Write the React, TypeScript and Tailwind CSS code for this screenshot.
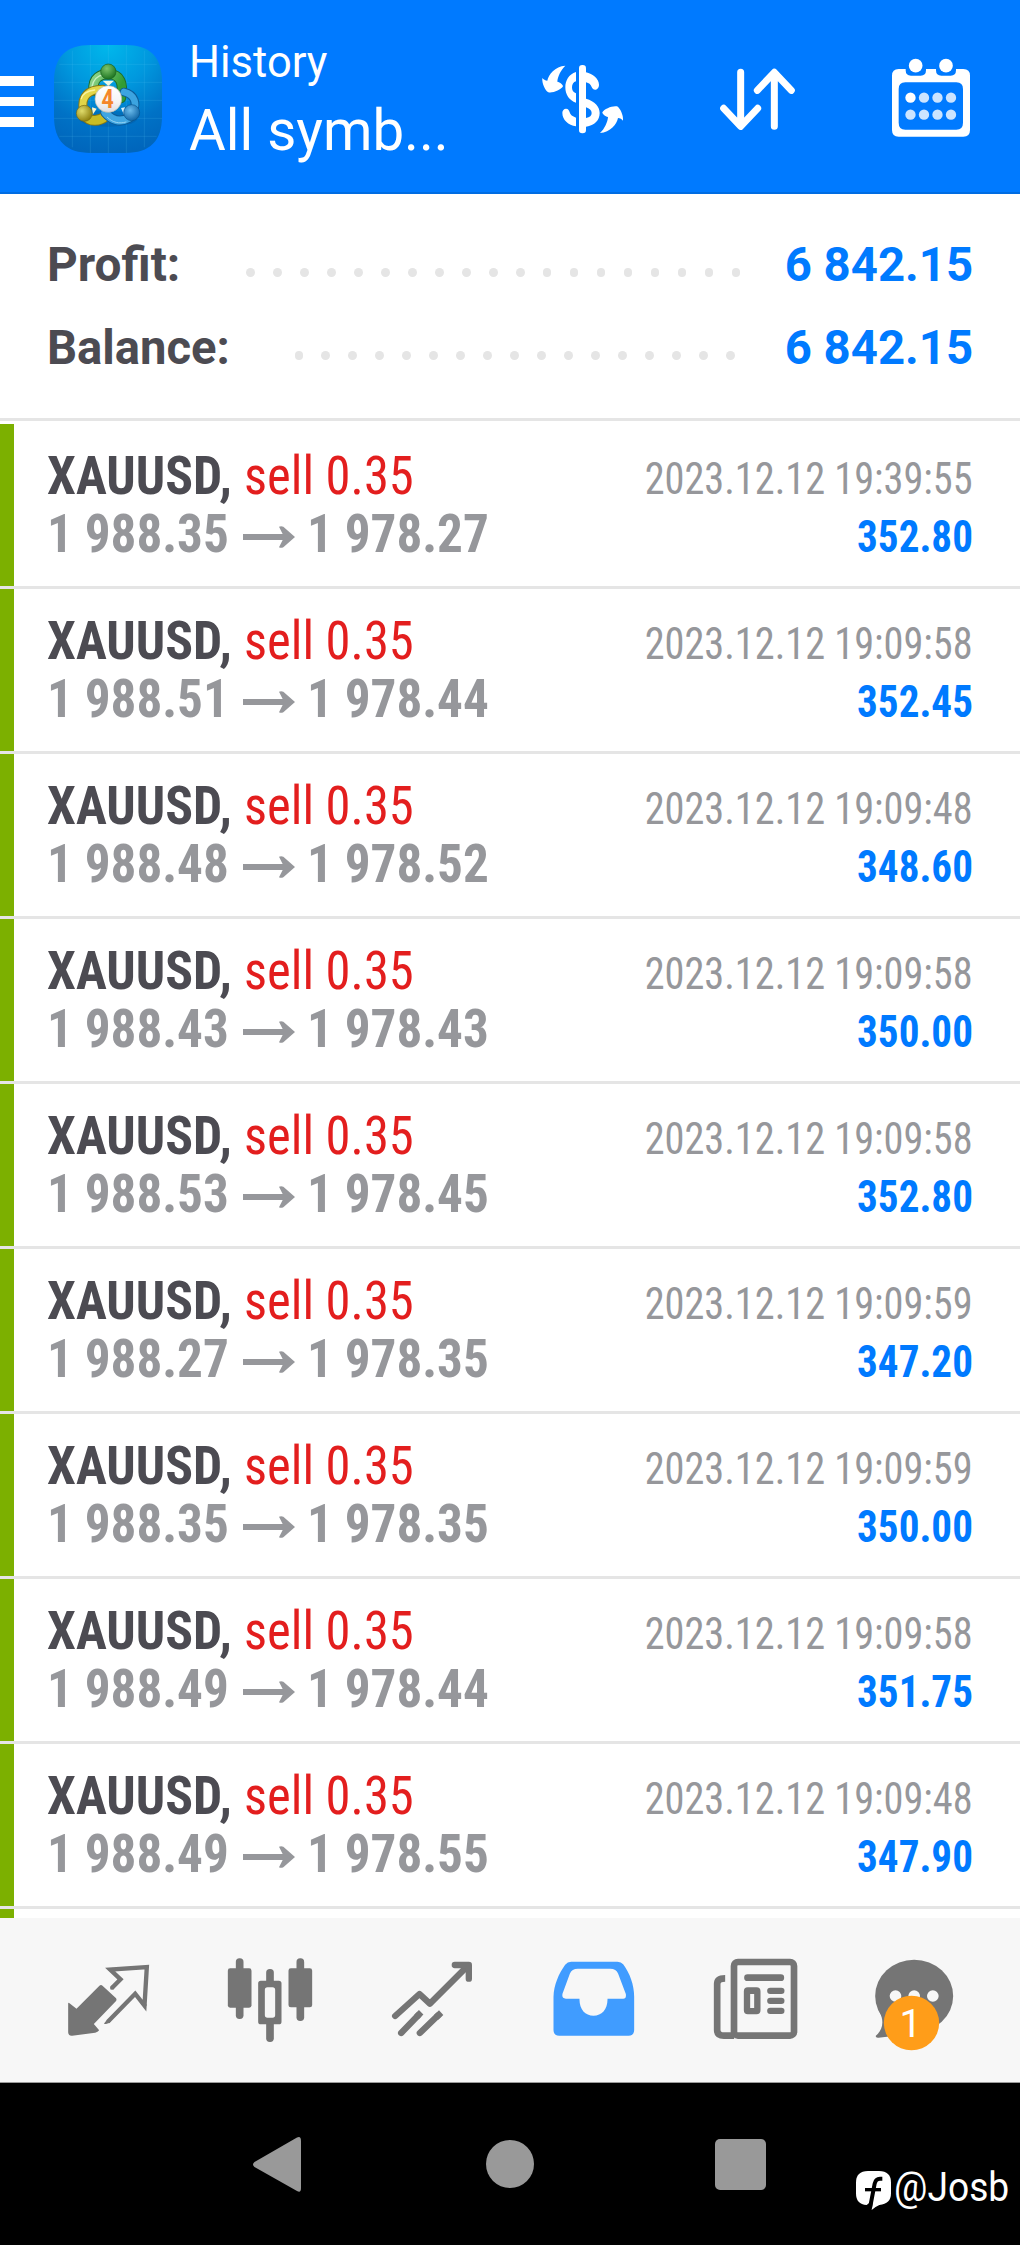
interface Deal {
  open: string;
  close: string;
  time: string;
  profit: string;
}

const deals: Deal[] = [
  { open: '1 988.35', close: '1 978.27', time: '2023.12.12 19:39:55', profit: '352.80' },
  { open: '1 988.51', close: '1 978.44', time: '2023.12.12 19:09:58', profit: '352.45' },
  { open: '1 988.48', close: '1 978.52', time: '2023.12.12 19:09:48', profit: '348.60' },
  { open: '1 988.43', close: '1 978.43', time: '2023.12.12 19:09:58', profit: '350.00' },
  { open: '1 988.53', close: '1 978.45', time: '2023.12.12 19:09:58', profit: '352.80' },
  { open: '1 988.27', close: '1 978.35', time: '2023.12.12 19:09:59', profit: '347.20' },
  { open: '1 988.35', close: '1 978.35', time: '2023.12.12 19:09:59', profit: '350.00' },
  { open: '1 988.49', close: '1 978.44', time: '2023.12.12 19:09:58', profit: '351.75' },
  { open: '1 988.49', close: '1 978.55', time: '2023.12.12 19:09:48', profit: '347.90' },
];

function AppLogo() {
  return (
    <svg className="w-[108px] h-[108px] mt-[45px] ml-5 shrink-0" viewBox="42 45 324 324" fill="none">
      <defs>
        <radialGradient id="bg" gradientUnits="userSpaceOnUse" cx="204" cy="45" r="325">
          <stop offset="0" stopColor="#00b8ec" />
          <stop offset="0.4" stopColor="#0098de" />
          <stop offset="0.75" stopColor="#0072c6" />
          <stop offset="1" stopColor="#0066bc" />
        </radialGradient>
        <radialGradient id="greenHead" cx="0.4" cy="0.3" r="0.7">
          <stop offset="0" stopColor="#7cc46c" />
          <stop offset="1" stopColor="#1c7420" />
        </radialGradient>
        <radialGradient id="yellowHead" cx="0.35" cy="0.35" r="0.7">
          <stop offset="0" stopColor="#e0dc6c" />
          <stop offset="1" stopColor="#8c7e0c" />
        </radialGradient>
        <radialGradient id="blueHead" cx="0.4" cy="0.35" r="0.7">
          <stop offset="0" stopColor="#6cbcec" />
          <stop offset="1" stopColor="#0c62a4" />
        </radialGradient>
        <linearGradient id="greenBody" x1="0" y1="0" x2="1" y2="0.4">
          <stop offset="0" stopColor="#8ed48a" />
          <stop offset="1" stopColor="#329c34" />
        </linearGradient>
        <linearGradient id="badge" x1="0" y1="0" x2="0" y2="1">
          <stop offset="0" stopColor="#ffffff" />
          <stop offset="0.6" stopColor="#f4f4f6" />
          <stop offset="1" stopColor="#dcdce2" />
        </linearGradient>
      </defs>
      <path d="M152 45H256C330 45 366 81 366 155V259C366 333 330 369 256 369H152C78 369 42 333 42 259V155C42 81 78 45 152 45Z" fill="url(#bg)" />
      <path d="M97 62V352M151 45V369M205 45V369M259 45V369M313 62V352M58 103H350M42 157H366M42 211H366M42 265H366M58 319H350" stroke="#5cc8f4" strokeOpacity="0.2" strokeWidth="2.5" />
      <ellipse cx="204" cy="266" rx="88" ry="24" fill="#00498c" fillOpacity="0.25" />
      <g strokeLinecap="round">
        <path d="M161 182C156 142 184 132 207 132C240 134 252 158 243 204" stroke="#1e6e2c" strokeWidth="31" />
        <path d="M161 182C156 142 184 132 207 132C240 134 252 158 243 204" stroke="url(#greenBody)" strokeWidth="25" />
        <path d="M155 172C160 148 175 136 192 134" stroke="#c8f0c0" strokeWidth="4" />
        <path d="M252 186C286 194 290 222 281 243" stroke="#0c5c98" strokeWidth="26" />
        <path d="M252 186C286 194 290 222 281 243" stroke="#3ca4e0" strokeWidth="20" />
        <path d="M188 178C145 178 122 200 130 240" stroke="#887812" strokeWidth="27" />
        <path d="M188 178C145 178 122 200 130 240" stroke="#e2d648" strokeWidth="21" />
        <path d="M136 256C150 278 178 274 198 258" stroke="#887812" strokeWidth="32" />
        <path d="M136 256C150 278 178 274 198 258" stroke="#cabc24" strokeWidth="26" />
        <path d="M196 248C214 270 240 280 270 262" stroke="#0c5c98" strokeWidth="30" />
        <path d="M196 248C214 270 240 280 270 262" stroke="#40a6e2" strokeWidth="24" />
        <path d="M202 262C218 278 238 282 258 276" stroke="#94d4f4" strokeWidth="3" />
        <path d="M124 206C128 190 146 182 164 180" stroke="#f8f4a0" strokeWidth="4" />
      </g>
      <path d="M188 152H222L205 168Z" fill="#eaf8e4" />
      <path d="M156 232L170 236L158 254Z" fill="#fbf6cc" />
      <path d="M243 234L255 232L252 254Z" fill="#d8f0fc" />
      <circle cx="205" cy="125" r="23" fill="url(#greenHead)" stroke="#186020" strokeWidth="2" />
      <circle cx="133" cy="250" r="24" fill="url(#yellowHead)" stroke="#786a10" strokeWidth="2" />
      <circle cx="275" cy="248" r="24" fill="url(#blueHead)" stroke="#0c548c" strokeWidth="2" />
      <circle cx="205" cy="207" r="40" fill="url(#badge)" stroke="#b8b8a8" strokeWidth="2" />
      <text x="203" y="233" textAnchor="middle" fill="#f4862a" className="font-['Roboto_Condensed'] font-semibold text-[76px]">4</text>
    </svg>
  );
}

function SymbolIcon() {
  const arrow = 'M196 107C165 108 145 135 142 152C136 152 130 148 127 144C125 160 136 182 145 187C158 190 183 180 189 169C190 165 180 156 172 155C173 140 182 120 196 107Z';
  return (
    <svg className="w-[90px] h-20 mt-[60px] shrink-0" viewBox="120 90 270 240" fill="#fff">
      <rect x="237" y="105" width="21" height="205" rx="10" />
      <path d="M228 126C206 133 196 152 196 172C196 194 208 212 228 218V190C219 187 216 180 216 172C216 163 220 156 228 154Z" />
      <path d="M258 127C278 131 297 147 297 164C297 172 292 179 286 179C279 179 277 175 275 171C272 163 267 159 258 157Z" />
      <path d="M258 206C285 214 299 230 299 249C299 270 284 287 258 290V264C270 262 275 257 275 249C275 241 268 235 258 232Z" />
      <path d="M228 289C205 285 187 270 187 248C187 241 192 236 198 236C205 236 208 242 209 247C211 255 217 259 228 263Z" />
      <path d={arrow} />
      <path d={arrow} transform="rotate(180 248 208)" />
    </svg>
  );
}

function SortIcon() {
  return (
    <svg className="w-[90px] h-20 mt-[60px] ml-20 shrink-0" viewBox="630 90 270 240" fill="none" stroke="#fff" strokeWidth="21" strokeLinecap="round" strokeLinejoin="round">
      <path d="M722 127V288M671 235L722 289L773 235" />
      <path d="M823 289V128M772 181L823 127L874 181" />
    </svg>
  );
}

function CalendarIcon() {
  return (
    <svg className="w-[100px] h-[100px] mt-[50px] ml-20 shrink-0" viewBox="1140 60 300 300" fill="#fff">
      <path fillRule="evenodd" d="M1196 117H1217V121Q1217 137 1233 137H1262Q1278 137 1278 121V117H1308V121Q1308 137 1324 137H1352Q1368 137 1368 121V117H1390Q1410 117 1410 137V300Q1410 320 1390 320H1196Q1176 320 1176 300V137Q1176 117 1196 117ZM1216 157Q1196 157 1196 177V278Q1196 299 1216 299H1369Q1389 299 1389 278V177Q1389 157 1369 157Z" />
      <circle cx="1247" cy="107" r="20.5" />
      <circle cx="1338" cy="107" r="20.5" />
      <circle cx="1231.5" cy="203" r="15.5" />
      <g fill="#cce4ff">
        <circle cx="1272" cy="203" r="15.5" />
        <circle cx="1312.5" cy="203" r="15.5" />
        <circle cx="1353" cy="203" r="15.5" />
        <circle cx="1231.5" cy="254" r="15.5" />
        <circle cx="1272" cy="254" r="15.5" />
        <circle cx="1312.5" cy="254" r="15.5" />
        <circle cx="1353" cy="254" r="15.5" />
      </g>
    </svg>
  );
}

function Header() {
  return (
    <header className="h-[194px] bg-[#007aff] border-b-2 border-[#006ce2] flex items-start text-white">
      <div className="pt-[76px] flex flex-col gap-[11px]">
        <div className="w-[34px] h-[9.5px] bg-white" />
        <div className="w-[34px] h-[9.5px] bg-white" />
        <div className="w-[34px] h-[9.5px] bg-white" />
      </div>
      <AppLogo />
      <div className="w-[351px] ml-[27px] pt-8 shrink-0">
        <div className="text-[45px] leading-[60px] mb-[3px] origin-left scale-x-[0.967]">History</div>
        <div className="text-[57px] leading-[72px] origin-left scale-x-[0.989]">All symb...</div>
      </div>
      <SymbolIcon />
      <SortIcon />
      <CalendarIcon />
    </header>
  );
}

function Dots({ count }: { count: number }) {
  return (
    <div className="flex gap-[18.33px] pt-4">
      {Array.from({ length: count }, (_, i) => (
        <div key={i} className="w-[8.67px] h-[8.67px] rounded-full bg-[#e5e5e5]" />
      ))}
    </div>
  );
}

function Summary() {
  return (
    <section className="h-[224px] pt-[29px] pl-[47px] pr-[47px] text-[48px] leading-[83px] font-bold">
      <div className="h-[83px] flex items-center">
        <div className="w-[199px] text-[#4c4b52] origin-left scale-x-[0.995]">Profit:</div>
        <Dots count={19} />
        <div className="ml-auto text-[#007aff] origin-right scale-x-[0.986]">6 842.15</div>
      </div>
      <div className="h-[83px] flex items-center">
        <div className="w-[247.5px] text-[#4c4b52] origin-left scale-x-[0.982]">Balance:</div>
        <Dots count={17} />
        <div className="ml-auto text-[#007aff] origin-right scale-x-[0.986]">6 842.15</div>
      </div>
    </section>
  );
}

function DealRow({ deal }: { deal: Deal }) {
  return (
    <>
      <div className="h-[162px] flex">
        <div className="w-[13.67px] bg-[#7cb000]" />
        <div className="flex-1 pt-[22px] pl-[33px] pr-[47px] text-[54.5px] leading-[58px] font-['Roboto_Condensed']">
          <div className="h-[58px] flex items-baseline">
            <div className="w-[197px] font-bold text-[#4c4b52] origin-left scale-x-[0.947]">XAUUSD,</div>
            <div className="text-[#e31e1e] origin-left scale-x-[0.928]">sell 0.35</div>
            <div className="ml-auto text-[44.7px] text-[#96979b] origin-right scale-x-[0.902]">{deal.time}</div>
          </div>
          <div className="h-[58px] flex items-baseline text-[#96979b] font-bold">
            <div className="w-[196px] origin-left scale-x-[0.939]">{deal.open}</div>
            <svg className="w-[52px] h-[22px] -translate-y-[4px]" viewBox="729 319 156 66" fill="#96979b">
              <path d="M729 343H848L837 321Q843 318 850 321L885 352L850 383Q843 386 837 383L848 361H729Z" />
            </svg>
            <div className="ml-3 origin-left scale-x-[0.939]">{deal.close}</div>
            <div className="ml-auto text-[44.7px] text-[#007aff] origin-right scale-x-[0.92]">{deal.profit}</div>
          </div>
        </div>
      </div>
      <div className="h-[3px] bg-[#e5e5e5]" />
    </>
  );
}

function TabBar() {
  return (
    <nav className="h-[165px] bg-[#f7f7f7] border-b border-[#9b9b9b] px-[27px] pt-[37px] grid grid-cols-6 justify-items-center">
      {/* quotes */}
      <svg className="w-[90px] h-[100px]" viewBox="187.5 225 270 300" fill="#757575">
        <path d="M203 370Q204 367 207 370L228 386L296 318Q301 313 306 317L346 354Q350 359 346 364L280 432L296 451Q292 456 284 458L215 467Q203 468 203 456Z" />
        <path d="M335 323L360 298L329 269L439 261L432 377L404 341L322 425" fill="none" stroke="#757575" strokeWidth="13" />
        <path d="M323 270L335 263L340 272L331 277ZM426 372H438V378L430 378ZM310 431L319 420L332 424Q324 433 315 432Z" />
        <circle cx="335" cy="323" r="6.5" />
      </svg>
      {/* chart */}
      <svg className="w-[90px] h-[100px]" viewBox="670.5 225 270 300" fill="#757575">
        <rect x="706" y="235" width="23" height="182" rx="11" />
        <rect x="682" y="265" width="71" height="118" rx="7" />
        <rect x="888" y="235" width="23" height="188" rx="11" />
        <rect x="864" y="265" width="71" height="117" rx="7" />
        <rect x="797" y="267" width="23" height="50" rx="11" />
        <rect x="797" y="420" width="23" height="66" rx="11" />
        <path fillRule="evenodd" d="M781 302H835Q843 302 843 310V425Q843 433 835 433H781Q773 433 773 425V310Q773 302 781 302ZM801 322Q793 322 793 330V405Q793 413 801 413H816Q824 413 824 405V330Q824 322 816 322Z" />
      </svg>
      {/* trade */}
      <svg className="w-[90px] h-[100px]" viewBox="1153.5 225 270 300" fill="none" stroke="#757575" strokeWidth="19" strokeLinecap="round" strokeLinejoin="round">
        <path d="M1184 408L1257 342L1288 371L1402 257" />
        <path d="M1363 255H1405V296" />
        <path d="M1202 459L1254 405M1258 459L1313 406" />
        <path strokeLinecap="butt" d="M1248 411L1262 397M1307 412L1322 398" />
      </svg>
      {/* history */}
      <svg className="w-[90px] h-[100px]" viewBox="106.5 225 270 300" fill="#409cff">
        <path fillRule="evenodd" d="M182 245H321Q332 245 338 253C358 280 371 315 371 350V450Q371 467 354 467H146Q129 467 129 450V350C130 315 145 280 164 254Q171 245 182 245ZM202 266Q184 266 178 281L156 341Q153 356 166 356H207C206 388 224 407 249 407C274 407 292 388 291 356H338Q348 356 346 342L323 281Q317 266 299 266Z" />
      </svg>
      {/* news */}
      <svg className="w-[90px] h-[100px]" viewBox="589.5 225 270 300" fill="#757575" overflow="visible">
        <rect x="670.5" y="246" width="180" height="221" rx="12" fill="none" stroke="#757575" strokeWidth="20" />
        <path d="M644 295Q620 295 620 312V450Q620 467 640 467H671" fill="none" stroke="#757575" strokeWidth="20" />
        <rect x="701" y="283" width="120" height="20" rx="10" />
        <path fillRule="evenodd" d="M712 322H738Q750 322 750 334V391Q750 403 738 403H712Q700 403 700 391V334Q700 322 712 322ZM719 342V384H731V342Z" />
        <rect x="770" y="323" width="52" height="19" rx="9.5" />
        <rect x="770" y="353" width="52" height="19" rx="9.5" />
        <rect x="770" y="383" width="52" height="19" rx="9.5" />
      </svg>
      {/* messages */}
      <svg className="w-[90px] h-[100px]" viewBox="1073.5 225 270 300">
        <ellipse cx="1212" cy="348" rx="117" ry="109" fill="#757575" />
        <path d="M1108 395C1124 425 1116 452 1097 467Q1095 474 1105 473L1150 468V400Z" fill="#757575" />
        <circle cx="1156" cy="348" r="17.5" fill="#f7f7f7" />
        <circle cx="1212" cy="348" r="17.5" fill="#f7f7f7" />
        <circle cx="1268" cy="348" r="17.5" fill="#f7f7f7" />
        <ellipse cx="1204" cy="429" rx="83" ry="82" fill="#ff9d19" />
        <text x="1201" y="471" textAnchor="middle" fill="#fff" className="font-['Roboto'] text-[118px]">1</text>
      </svg>
    </nav>
  );
}

function SystemBar() {
  return (
    <div className="h-[162px] bg-black flex items-start pl-[252px]">
      <svg className="w-[50px] h-[57px] mt-[53px] shrink-0" viewBox="0 0 50 57" fill="#999">
        <path d="M45 1.5Q49 -0.500 49 5V52Q49 57.500 45 55L2.500 31Q-0.500 28.500 2.500 26Z" />
      </svg>
      <div className="w-12 h-12 mt-[57px] ml-[184px] rounded-full bg-[#999] shrink-0" />
      <div className="w-[51px] h-[51px] mt-[56px] ml-[181px] rounded-[5px] bg-[#999] shrink-0" />
      <svg className="w-[35px] h-[39px] mt-[88px] ml-[90px] shrink-0" viewBox="46 63 105 117" fill="#fff">
        <path d="M82 63H115Q151 63 151 98V130Q151 162 116 165Q104 170 93 180L97 150L78 165Q46 164 46 130V98Q46 63 82 63Z" />
        <path d="M125 86H118Q105 86 102 101L88 174" fill="none" stroke="#000" strokeWidth="12" />
        <path d="M73 119H121" stroke="#000" strokeWidth="10" />
      </svg>
      <div className="mt-[85px] ml-[3px] w-[125px] shrink-0 text-white text-[40px] leading-10 font-normal origin-left scale-x-[0.93]">@Josb</div>
    </div>
  );
}

export default function App() {
  return (
    <div className="w-[1020px] h-[2245px] overflow-hidden bg-white font-['Roboto',sans-serif] whitespace-nowrap">
      <Header />
      <Summary />
      <div className="h-[3px] bg-[#e5e5e5] mb-[3px]" />
      {deals.map((deal, i) => (
        <DealRow key={i} deal={deal} />
      ))}
      <div className="h-[9px] w-[13.67px] bg-[#7cb000]" />
      <TabBar />
      <SystemBar />
    </div>
  );
}
